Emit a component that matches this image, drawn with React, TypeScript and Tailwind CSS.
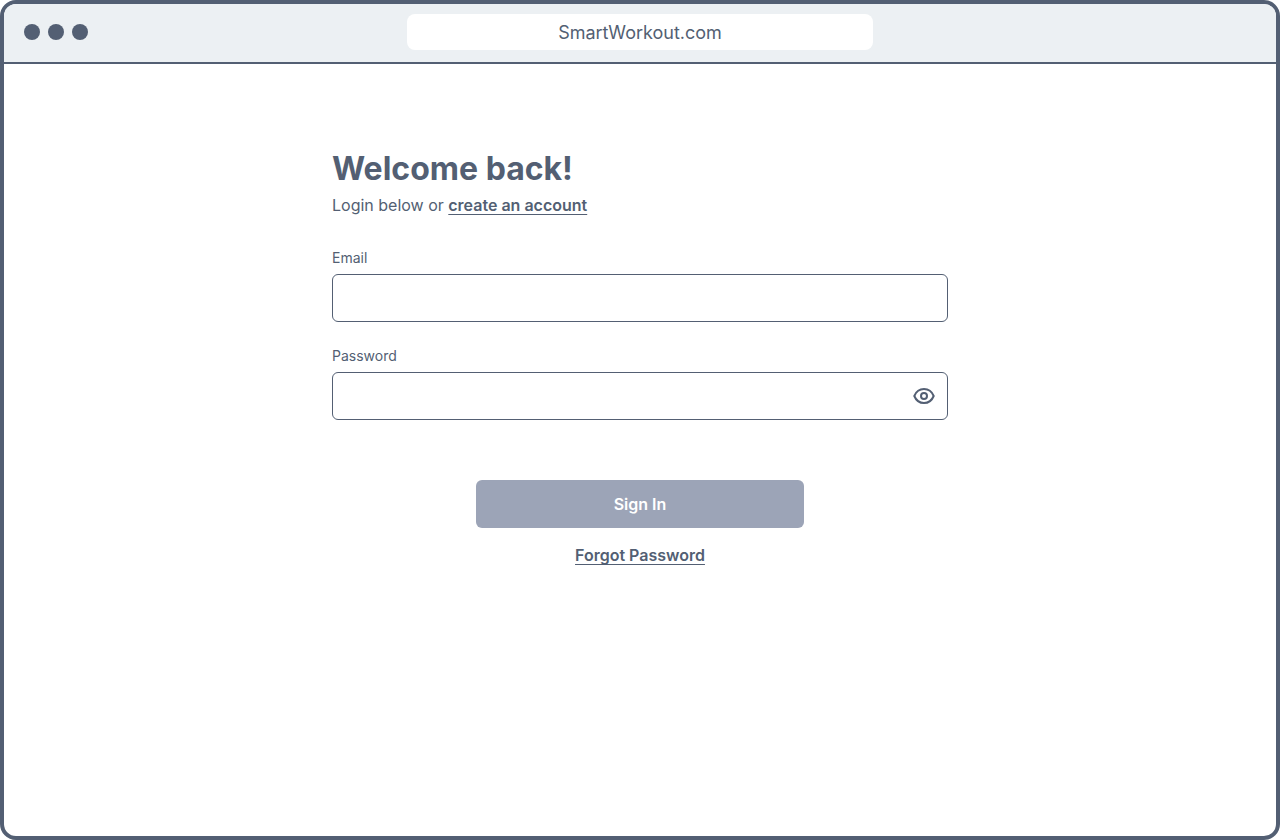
export default function App() {
  return (
    <div className="flex min-h-screen flex-col overflow-hidden rounded-2xl border-4 border-[#535f73] bg-white font-['Inter',sans-serif] text-[#535f73]">
      <header className="grid h-[60px] grid-cols-[1fr_466px_1fr] items-center border-b-2 border-[#535f73] bg-[#ecf0f3] px-5 pb-0.5">
        <div className="flex gap-2">
          <span className="size-4 rounded-full bg-[#535f73]" />
          <span className="size-4 rounded-full bg-[#535f73]" />
          <span className="size-4 rounded-full bg-[#535f73]" />
        </div>
        <div className="flex h-9 items-center justify-center rounded-lg bg-white pt-0.5 text-lg">SmartWorkout.com</div>
      </header>
      <main className="mx-auto w-full max-w-[616px] pt-[85px]">
        <h1 className="text-[32px] leading-10 font-bold">Welcome back!</h1>
        <p className="mt-1 text-base leading-6">
          Login below or{" "}
          <a href="#create" className="font-semibold underline underline-offset-3">create an account</a>
        </p>
        <form className="mt-[31px] flex flex-col" onSubmit={(e) => e.preventDefault()}>
          <label htmlFor="email" className="text-sm leading-5">Email</label>
          <input id="email" type="email" className="mt-1.5 h-12 w-full rounded-md border border-[#535f73] px-3 outline-none" />
          <label htmlFor="password" className="mt-6 text-sm leading-5">Password</label>
          <div className="mt-1.5 flex h-12 items-center rounded-md border border-[#535f73] pr-[11px]">
            <input id="password" type="password" className="h-full min-w-0 flex-1 px-3 outline-none" />
            <button type="button" aria-label="Show password" className="size-6">
              <svg viewBox="0 0 24 24" fill="none" stroke="currentColor" strokeWidth="2" strokeLinejoin="round" className="size-6">
                <path d="M2.300 12C4.100 7.600 7.500 5 12 5s7.900 2.600 9.700 7c-1.800 4.400-5.200 7-9.700 7s-7.900-2.600-9.700-7z" />
                <circle cx="12" cy="12" r="3" />
              </svg>
            </button>
          </div>
          <button type="submit" className="mt-15 h-12 w-[328px] self-center rounded-md bg-[#9ca4b7] font-semibold text-white">Sign In</button>
          <a href="#forgot" className="mt-[15px] self-center font-semibold underline underline-offset-3">Forgot Password</a>
        </form>
      </main>
    </div>
  );
}
